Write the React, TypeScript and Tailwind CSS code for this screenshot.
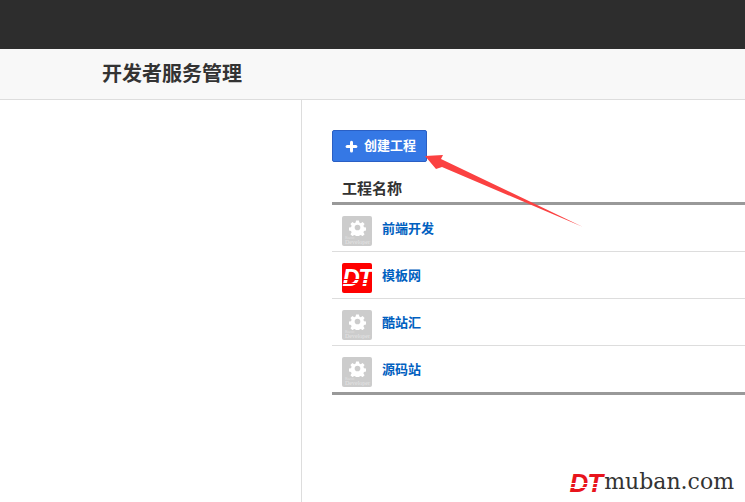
import { Plus } from 'lucide-react';

const projects = [
  { name: '前端开发', logo: 'default' },
  { name: '模板网', logo: 'dt' },
  { name: '酷站汇', logo: 'default' },
  { name: '源码站', logo: 'default' }
];

const cjk = "font-['Liberation_Sans','Noto_Sans_CJK_SC',sans-serif]";

function DefaultLogo() {
  return (
    <div className="relative flex h-[30px] w-[30px] shrink-0 flex-col items-center rounded-[2px] bg-[#cccccc] pt-[3px]">
      <svg width="17" height="17" viewBox="0 0 24 24" fill="#ffffff">
        <path
          fillRule="evenodd"
          d="M10 2h4l.6 3 2 .9 2.600-1.700 2.800 2.800-1.700 2.600.9 2 3 .6v4l-3 .6-.9 2 1.700 2.600-2.800 2.800-2.600-1.700-2 .9-.6 3h-4l-.6-3-2-.9-2.600 1.700-2.800-2.800 1.700-2.600-.9-2-3-.6v-4l3-.6.9-2-1.700-2.600 2.800-2.800 2.600 1.700 2-.9zM12 8a4 4 0 1 0 0 8 4 4 0 0 0 0-8z"
        />
      </svg>
      <span className="absolute bottom-[6px] left-[3px] font-['Liberation_Sans',sans-serif] text-[4px] leading-none text-white/40">Basic</span>
      <span className="absolute bottom-[1px] left-[3px] font-['Liberation_Serif',serif] text-[6px] leading-none text-white/50">Developer</span>
    </div>
  );
}

function DtLogo() {
  return (
    <div className="relative flex h-[30px] w-[30px] shrink-0 items-center justify-center overflow-hidden rounded-[2px] bg-[#ff0000]">
      <span className="font-['Liberation_Sans',sans-serif] text-[24px] leading-none font-bold tracking-[-1.5px] text-white italic">DT</span>
      <span className="absolute top-[16px] left-0 h-[1px] w-full bg-[#ff0000]" />
      <span className="absolute top-[20px] left-0 h-[1px] w-full bg-[#ff0000]" />
    </div>
  );
}

export default function App() {
  return (
    <div className={`relative flex h-[502px] w-[745px] flex-col overflow-hidden bg-white ${cjk}`}>
      <div className="h-[49px] shrink-0 bg-[#2d2d2d]" />
      <div className="flex h-[51px] shrink-0 items-center border-b border-[#dddddd] bg-[#f8f8f8] pl-[102px]">
        <h1 className="text-[20px] font-bold text-[#333333]">开发者服务管理</h1>
      </div>
      <div className="flex flex-1">
        <div className="w-[302px] shrink-0 border-r border-[#dddddd]" />
        <div className="flex-1 pt-[30px] pl-[30px]">
          <button
            type="button"
            className="flex h-[32px] w-[95px] items-center gap-[5px] rounded-[2px] border border-[#2a5fc4] bg-[#3578e5] pl-[11px] text-[13px] font-bold text-white"
          >
            <Plus size={15} strokeWidth={4.8} />
            创建工程
          </button>
          <div className="mt-[16px] flex h-[27px] items-center border-b-[3px] border-[#999999] pb-[3px] pl-[10px] text-[15px] leading-none font-bold text-[#333333]">
            工程名称
          </div>
          <div className="border-b-[3px] border-[#999999]">
            {projects.map((project, i) => (
              <div
                key={project.name}
                className={`flex items-center gap-[10px] pt-[11px] pb-[5px] pl-[10px] ${i < projects.length - 1 ? 'border-b border-[#dddddd]' : ''}`}
              >
                {project.logo === 'dt' ? <DtLogo /> : <DefaultLogo />}
                <a className="mb-[4px] text-[13px] font-bold text-[#0060c0]">{project.name}</a>
              </div>
            ))}
          </div>
        </div>
      </div>

      {/* annotation arrow */}
      <svg className="absolute top-[150px] left-[425px]" width="165" height="85" viewBox="0 0 165 85">
        <path d="M0 6 L18 5 L16 9 L158 77 L17 17 L11 19 Z" fill="#fb4141" />
      </svg>

      {/* watermark */}
      <div className="absolute right-[11px] bottom-[9px] flex items-end">
        <div className="relative mr-[2px]">
          <span className="block font-['Liberation_Sans',sans-serif] text-[26px] leading-[20px] font-bold tracking-[-1px] text-[#e8141c] italic">DT</span>
          <span className="absolute top-[10px] left-0 h-[1px] w-full bg-white" />
          <span className="absolute top-[14px] left-0 h-[1px] w-full bg-white" />
        </div>
        <span className="font-['DejaVu_Serif',serif] text-[22px] leading-none text-[#333333]">muban.com</span>
      </div>
    </div>
  );
}
